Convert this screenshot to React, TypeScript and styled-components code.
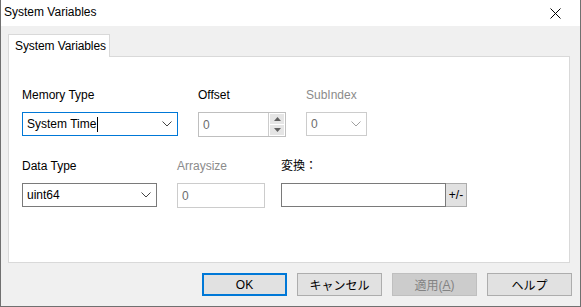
import React from "react";
import styled, { createGlobalStyle } from "styled-components";

const GlobalStyle = createGlobalStyle`
  html, body {
    margin: 0;
    padding: 0;
    background: #ffffff;
  }
  * {
    box-sizing: border-box;
  }
`;

const FONT = `"Liberation Sans", "Noto Sans CJK JP", Arial, sans-serif`;

const Window = styled.div`
  width: 581px;
  height: 307px;
  display: flex;
  flex-direction: column;
  border: 1px solid #707070;
  border-top: none;
  font-family: ${FONT};
  font-size: 12px;
  color: #000000;
  background: #f0f0f0;
`;

const TitleBar = styled.div`
  height: 26px;
  display: flex;
  align-items: center;
  justify-content: space-between;
  padding: 0 0 0 3px;
  background: #ffffff;
`;

const TitleText = styled.span`
  font-size: 12px;
  line-height: 16px;
  padding-bottom: 2px;
`;

const CloseButton = styled.div`
  width: 46px;
  height: 26px;
  display: flex;
  align-items: center;
  justify-content: center;
  margin-right: 2px;
`;

const Body = styled.div`
  flex: 1;
  display: flex;
  flex-direction: column;
  padding: 8px 8px 0 7px;
`;

const TabStrip = styled.div`
  display: flex;
  height: 22px;
`;

const Tab = styled.div`
  width: 102px;
  height: 23px;
  display: flex;
  align-items: center;
  padding-left: 6px;
  padding-bottom: 1px;
  white-space: nowrap;
  letter-spacing: -0.1px;
  background: #ffffff;
  border: 1px solid #d9d9d9;
  border-bottom: none;
  position: relative;
  z-index: 1;
`;

const Panel = styled.div`
  height: 207px;
  background: #ffffff;
  border: 1px solid #d9d9d9;
  margin-right: 2px;
  padding: 30px 0 0 13px;
  display: flex;
  flex-direction: column;
  gap: 21px;
`;

const FormRow = styled.div`
  display: flex;
  align-items: flex-start;
`;

const Field = styled.div<{ $gap?: number }>`
  display: flex;
  flex-direction: column;
  margin-left: ${(p) => p.$gap ?? 0}px;
`;

const Label = styled.div<{ $disabled?: boolean }>`
  height: 16px;
  line-height: 16px;
  margin-bottom: 9px;
  color: ${(p) => (p.$disabled ? "#8b8b8b" : "#000000")};
`;

const Box = styled.div<{
  $width: number;
  $height?: number;
  $border?: string;
  $color?: string;
}>`
  width: ${(p) => p.$width}px;
  height: ${(p) => p.$height ?? 24}px;
  display: flex;
  align-items: center;
  background: #ffffff;
  border: 1px solid ${(p) => p.$border ?? "#7a7a7a"};
  color: ${(p) => p.$color ?? "#000000"};
  padding-left: 4px;
`;

const BoxText = styled.span`
  flex: 1;
  display: flex;
  align-items: center;
  line-height: 16px;
`;

const Caret = styled.span`
  display: inline-block;
  width: 1px;
  height: 15px;
  background: #000000;
  margin-left: 1px;
`;

const Chevron = styled.div`
  width: 20px;
  display: flex;
  justify-content: center;
  align-items: center;
`;

const SpinColumn = styled.div`
  width: 17px;
  height: 100%;
  display: flex;
  flex-direction: column;
  gap: 1px;
  padding: 1px;
  border-left: 1px solid #cccccc;
  background: #ffffff;
`;

const SpinButton = styled.div`
  flex: 1;
  display: flex;
  align-items: center;
  justify-content: center;
  background: #e5e5e5;
`;

const Inline = styled.div`
  display: flex;
`;

const SignButton = styled.div`
  width: 21px;
  height: 24px;
  display: flex;
  align-items: center;
  justify-content: center;
  background: #e1e1e1;
  border: 1px solid #adadad;
  border-left: none;
  font-size: 12px;
`;

const Footer = styled.div`
  display: flex;
  justify-content: flex-end;
  gap: 10px;
  padding-top: 10px;
`;

const Button = styled.div<{ $default?: boolean; $disabled?: boolean }>`
  width: 85px;
  height: 23px;
  display: flex;
  align-items: center;
  justify-content: center;
  background: ${(p) => (p.$disabled ? "#cccccc" : "#e1e1e1")};
  border: ${(p) =>
    p.$default
      ? "2px solid #0078d7"
      : p.$disabled
      ? "1px solid #bfbfbf"
      : "1px solid #adadad"};
  color: ${(p) => (p.$disabled ? "#838383" : "#000000")};
`;

const Underline = styled.span`
  text-decoration: underline;
`;

const ChevronIcon = ({ color }: { color: string }) => (
  <svg width="10" height="6" viewBox="0 0 10 6">
    <polyline points="0.5,0.5 5,5 9.5,0.5" fill="none" stroke={color} strokeWidth="1" />
  </svg>
);

const Arrow = ({ up }: { up?: boolean }) => (
  <svg width="7" height="4" viewBox="0 0 7 4">
    <polygon points={up ? "3.5,0 7,4 0,4" : "0,0 7,0 3.5,4"} fill="#606060" />
  </svg>
);

export default function App() {
  return (
    <>
      <GlobalStyle />
      <Window>
        <TitleBar>
          <TitleText>System Variables</TitleText>
          <CloseButton>
            <svg width="11" height="11" viewBox="0 0 11 11">
              <path d="M0.5 0.5 L10.5 10.5 M10.5 0.5 L0.5 10.5" stroke="#000" strokeWidth="1" />
            </svg>
          </CloseButton>
        </TitleBar>
        <Body>
          <TabStrip>
            <Tab>System Variables</Tab>
          </TabStrip>
          <Panel>
            <FormRow>
              <Field>
                <Label>Memory Type</Label>
                <Box $width={156} $border="#0078d7">
                  <BoxText>
                    System Time
                    <Caret />
                  </BoxText>
                  <Chevron>
                    <ChevronIcon color="#444444" />
                  </Chevron>
                </Box>
              </Field>
              <Field $gap={20}>
                <Label>Offset</Label>
                <Box $width={88} $height={25} $border="#bfbfbf" $color="#6d6d6d">
                  <BoxText>0</BoxText>
                  <SpinColumn>
                    <SpinButton>
                      <Arrow up />
                    </SpinButton>
                    <SpinButton>
                      <Arrow />
                    </SpinButton>
                  </SpinColumn>
                </Box>
              </Field>
              <Field $gap={20}>
                <Label $disabled>SubIndex</Label>
                <Box $width={61} $border="#cccccc" $color="#6d6d6d">
                  <BoxText>0</BoxText>
                  <Chevron>
                    <ChevronIcon color="#a0a0a0" />
                  </Chevron>
                </Box>
              </Field>
            </FormRow>
            <FormRow>
              <Field>
                <Label>Data Type</Label>
                <Box $width={135}>
                  <BoxText>uint64</BoxText>
                  <Chevron>
                    <ChevronIcon color="#444444" />
                  </Chevron>
                </Box>
              </Field>
              <Field $gap={20}>
                <Label $disabled>Arraysize</Label>
                <Box $width={88} $height={25} $border="#cccccc" $color="#6d6d6d">
                  <BoxText>0</BoxText>
                </Box>
              </Field>
              <Field $gap={16}>
                <Label>変換：</Label>
                <Inline>
                  <Box $width={165}>
                    <BoxText />
                  </Box>
                  <SignButton>+/-</SignButton>
                </Inline>
              </Field>
            </FormRow>
          </Panel>
          <Footer>
            <Button $default>OK</Button>
            <Button>キャンセル</Button>
            <Button $disabled>
              適用(<Underline>A</Underline>)
            </Button>
            <Button>ヘルプ</Button>
          </Footer>
        </Body>
      </Window>
    </>
  );
}
